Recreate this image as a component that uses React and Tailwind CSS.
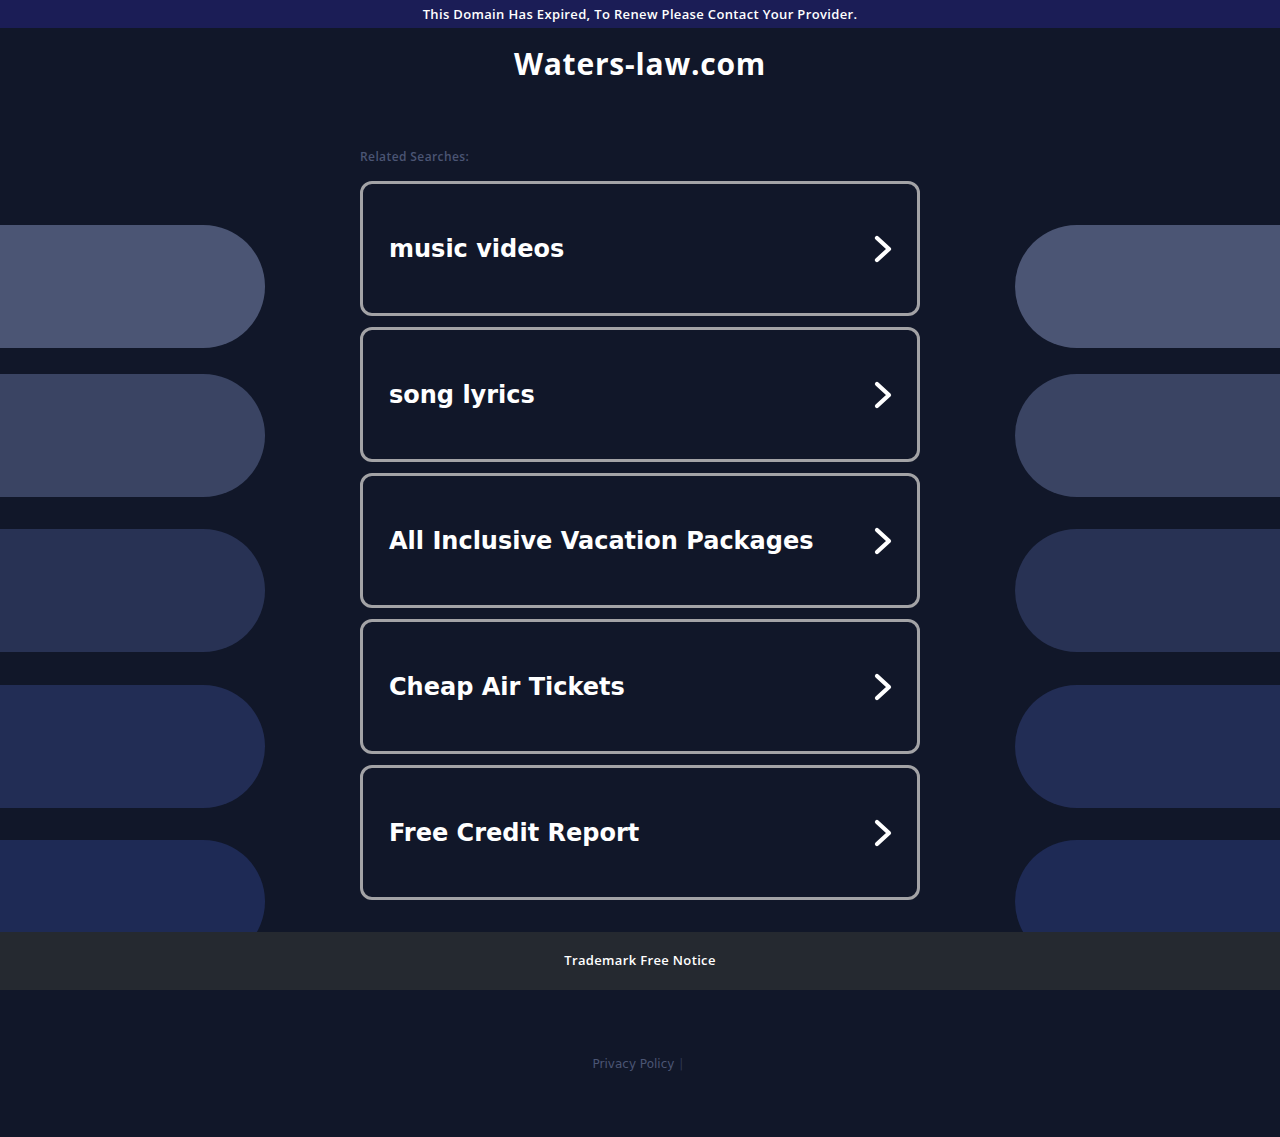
import React from "react";

const items = [
  "music videos",
  "song lyrics",
  "All Inclusive Vacation Packages",
  "Cheap Air Tickets",
  "Free Credit Report",
];

const pills = [
  { c: "bg-[#4b5574]", mt: "mt-[144px]" },
  { c: "bg-[#3a4463]", mt: "mt-[26px]" },
  { c: "bg-[#283254]", mt: "mt-[32px]" },
  { c: "bg-[#222d55]", mt: "mt-[33px]" },
  { c: "bg-[#1e2a55]", mt: "mt-[32px]" },
];

function Chevron() {
  return (
    <svg width="24" height="32" viewBox="0 0 24 32" className="shrink-0">
      <polyline
        points="6,5 18,16 6,27"
        fill="none"
        stroke="#fff"
        strokeWidth="4.2"
        strokeLinecap="round"
        strokeLinejoin="round"
      />
    </svg>
  );
}

function SideColumn({ side }) {
  return (
    <div className="w-[265px] h-full shrink-0 overflow-hidden flex flex-col">
      {pills.map((p, i) => (
        <div
          key={i}
          className={`${p.mt} h-[123px] shrink-0 w-full ${p.c} ${
            side === "left" ? "rounded-r-full" : "rounded-l-full"
          }`}
        />
      ))}
    </div>
  );
}

export default function App() {
  const mont = { fontFamily: "'Open Sans', 'Liberation Sans', sans-serif" };
  return (
    <div className="min-h-[1137px] bg-[#111729] flex flex-col">
      <div
        className="h-[28px] pt-[2px] bg-[#1b1d56] flex items-center justify-center text-white text-[13px] font-semibold tracking-[0.35px]"
        style={mont}
      >
        This Domain Has Expired, To Renew Please Contact Your Provider.
      </div>
      <div
        className="mt-[17px] h-[36px] flex items-center justify-center text-white text-[30px] font-bold tracking-[0.8px]"
        style={mont}
      >
        Waters-law.com
      </div>
      <div className="h-[851px] flex justify-between overflow-hidden">
        <SideColumn side="left" />
        <div className="w-[560px] shrink-0 pt-[68px] flex flex-col">
          <div
            className="h-[16px] leading-[16px] text-[12px] text-[#4b5574] font-semibold tracking-[0.4px]"
            style={mont}
          >
            Related Searches:
          </div>
          <div className="mt-[16px] flex flex-col gap-[11px]">
            {items.map((t) => (
              <div
                key={t}
                className="h-[135px] rounded-[12px] border-[3px] border-[#a3a3a6] bg-[#111729] flex items-center justify-between pl-[26px] pr-[22px]"
              >
                <span
                  className="text-white text-[24px] font-bold"
                  style={{ fontFamily: "'DejaVu Sans', sans-serif" }}
                >
                  {t}
                </span>
                <Chevron />
              </div>
            ))}
          </div>
        </div>
        <SideColumn side="right" />
      </div>
      <div
        className="h-[58px] bg-[#252930] flex items-center justify-center text-white text-[13px] font-semibold tracking-[0.35px]"
        style={mont}
      >
        Trademark Free Notice
      </div>
      <div
        className="mt-[66px] h-[16px] flex items-center justify-center text-[12px] text-[#4b5574] pr-[4px]"
        style={{ fontFamily: "'DejaVu Sans', sans-serif" }}
      >
        <span>Privacy Policy</span>
        <span className="ml-[5px] text-[#2e3650]">|</span>
      </div>
    </div>
  );
}
